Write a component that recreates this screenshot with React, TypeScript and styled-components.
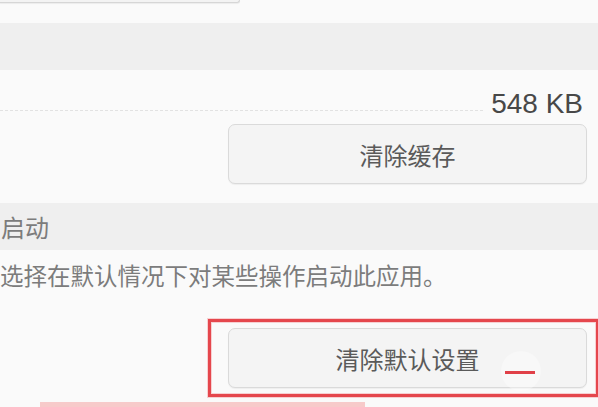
import React from 'react';
import styled, { createGlobalStyle } from 'styled-components';

const GlobalStyle = createGlobalStyle`
  html, body {
    margin: 0;
    padding: 0;
    background: #fafafa;
  }
  body {
    font-family: "Noto Sans CJK SC", "Noto Sans", sans-serif;
  }
`;

const Page = styled.div`
  width: 598px;
  height: 407px;
  overflow: hidden;
  background: #fafafa;
  display: flex;
  flex-direction: column;
`;

const TopButtonEdge = styled.div`
  width: 240px;
  height: 3px;
  box-sizing: border-box;
  background: #f3f3f3;
  border: 1px solid #d6d6d6;
  border-top: none;
  border-left: none;
  border-radius: 0 0 7px 0;
  box-shadow: 0 1px 1px rgba(0, 0, 0, 0.06);
`;

const Band = styled.div<{ $top: number }>`
  margin-top: ${(p) => p.$top}px;
  height: 47px;
  background: #efefef;
  display: flex;
  align-items: center;
`;

const BandTitle = styled.span`
  font-size: 24px;
  color: #7c7c7c;
  padding-left: 1px;
  line-height: 1;
`;

const SizeRow = styled.div`
  height: 54px;
  display: flex;
  align-items: flex-end;
  justify-content: flex-end;
  padding-right: 15px;
`;

const DottedLine = styled.div`
  flex: 1;
  align-self: flex-end;
  margin-bottom: 13px;
  margin-right: 8px;
  border-bottom: 1px dashed #e2e2e2;
`;

const SizeValue = styled.span`
  font-family: "Liberation Sans", Roboto, sans-serif;
  font-size: 28px;
  color: #484848;
  line-height: 1;
  margin-bottom: 6px;
`;

const ButtonWrap = styled.div`
  padding-left: 228px;
`;

const Button = styled.div`
  position: relative;
  width: 359px;
  height: 60px;
  box-sizing: border-box;
  background: #f4f4f4;
  border: 1px solid #dadada;
  border-radius: 7px;
  box-shadow: 0 1px 1px rgba(0, 0, 0, 0.05);
  display: flex;
  align-items: center;
  justify-content: center;
  font-size: 24px;
  color: #5a5a5a;
`;

const Description = styled.div`
  height: 69px;
  box-sizing: border-box;
  padding-top: 11px;
  font-size: 23.5px;
  color: #7c7c7c;
  line-height: 1.2;
  white-space: nowrap;
`;

const Highlight = styled.div`
  margin-left: 208px;
  width: 390px;
  height: 78px;
  box-sizing: border-box;
  border: 3px solid #e5474d;
  border-right-width: 2px;
  box-shadow: 0 0 0 1px rgba(240, 130, 135, 0.35), inset 0 0 0 1px rgba(240, 130, 135, 0.35);
  padding: 6px 0 0 17px;
`;

const RedDash = styled.div`
  position: absolute;
  left: 276px;
  top: 42px;
  width: 30px;
  height: 3px;
  background: #e04048;
`;

const Glow = styled.div`
  position: absolute;
  left: 272px;
  top: 22px;
  width: 40px;
  height: 40px;
  border-radius: 50%;
  background: rgba(255, 255, 255, 0.35);
`;

const PinkLine = styled.div`
  margin-top: 5px;
  margin-left: 40px;
  width: 325px;
  height: 5px;
  background: #f7caca;
`;

export default function App() {
  return (
    <>
      <GlobalStyle />
      <Page>
        <TopButtonEdge />
        <Band $top={20} />
        <SizeRow>
          <DottedLine />
          <SizeValue>548 KB</SizeValue>
        </SizeRow>
        <ButtonWrap>
          <Button>清除缓存</Button>
        </ButtonWrap>
        <Band $top={19}>
          <BandTitle>启动</BandTitle>
        </Band>
        <Description>选择在默认情况下对某些操作启动此应用。</Description>
        <Highlight>
          <Button>
            清除默认设置
            <Glow />
            <RedDash />
          </Button>
        </Highlight>
        <PinkLine />
      </Page>
    </>
  );
}
